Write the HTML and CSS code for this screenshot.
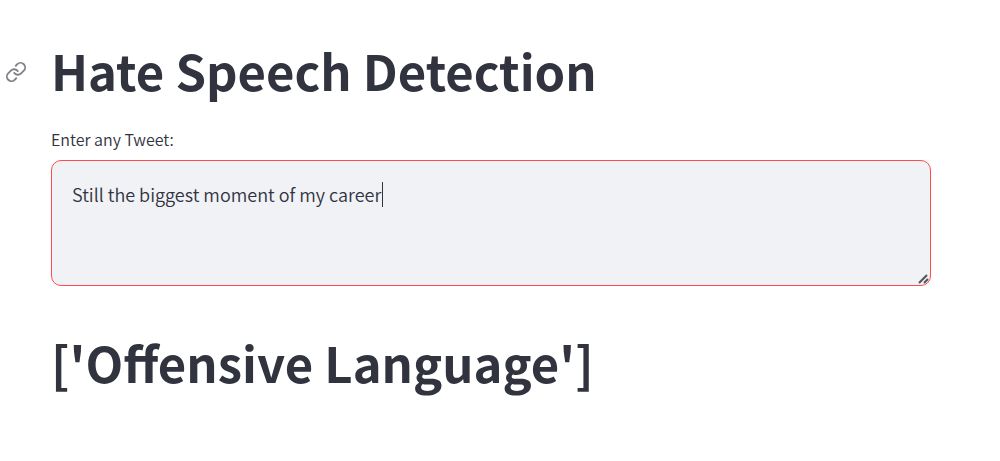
FILE: index.html
```
<!DOCTYPE html>
<html lang="en">
<head>
<meta charset="utf-8">
<meta name="viewport" content="width=device-width, initial-scale=1">
<title>Hate Speech Detection</title>
<link rel="stylesheet" href="styles.css">
</head>
<body>
<main class="page">
  <header class="title-row">
    <a class="anchor" href="#title" aria-label="Link to this heading">
      <svg viewBox="0 0 24 24" width="22" height="22" aria-hidden="true"><path d="M10 13a5 5 0 0 0 7.54.54l3-3a5 5 0 0 0-7.07-7.07l-1.72 1.71"/><path d="M14 11a5 5 0 0 0-7.54-.54l-3 3a5 5 0 0 0 7.07 7.07l1.71-1.71"/></svg>
    </a>
    <h1 class="heading" id="title">Hate Speech Detection</h1>
  </header>
  <div class="field">
    <label class="label" for="tweet">Enter any Tweet:</label>
    <div class="box">
      <textarea class="input" id="tweet" autofocus>Still the biggest moment of my career</textarea>
      <span class="caret" aria-hidden="true"></span>
      <svg class="grip" viewBox="0 0 12 12" width="12" height="12" aria-hidden="true"><path d="M1 10L9 2M6 10L10 6"/></svg>
    </div>
  </div>
  <h1 class="heading">['Offensive Language']</h1>
</main>
</body>
</html>
```
FILE: styles.css
```
* { box-sizing: border-box; }
body {
  margin: 0;
  background: #fff;
  color: #31333f;
  font-family: "Source Sans Pro", "Noto Sans CJK SC", "Noto Sans", sans-serif;
}
.page { padding: 38px 69px 40px 51px; }
.title-row { display: flex; align-items: center; margin-left: -46px; gap: 24px; }
.anchor { display: flex; padding-top: 4px; color: #808288; }
.anchor svg { fill: none; stroke: currentColor; stroke-width: 2; stroke-linecap: round; stroke-linejoin: round; }
.heading { margin: 0; font-size: 49px; line-height: 64px; font-weight: 700; white-space: nowrap; }
.field { margin: 28px 0 44px; }
.label { display: block; font-size: 16px; line-height: 18px; font-weight: 350; margin-bottom: 12px; }
.box { position: relative; }
.input {
  display: block;
  width: 100%;
  height: 126px;
  padding: 19px 20px;
  border: 1px solid #ff4b4b;
  border-radius: 10px;
  outline: none;
  resize: none;
  background: #f0f2f6;
  color: #31333f;
  caret-color: transparent;
  font: 350 18px/28px "Source Sans Pro", "Noto Sans CJK SC", "Noto Sans", sans-serif;
}
.caret { position: absolute; left: 331px; top: 22px; width: 1px; height: 25px; background: #31333f; }
.grip { position: absolute; right: 1px; bottom: 1px; fill: none; stroke: #50525c; stroke-width: 2; }
```
